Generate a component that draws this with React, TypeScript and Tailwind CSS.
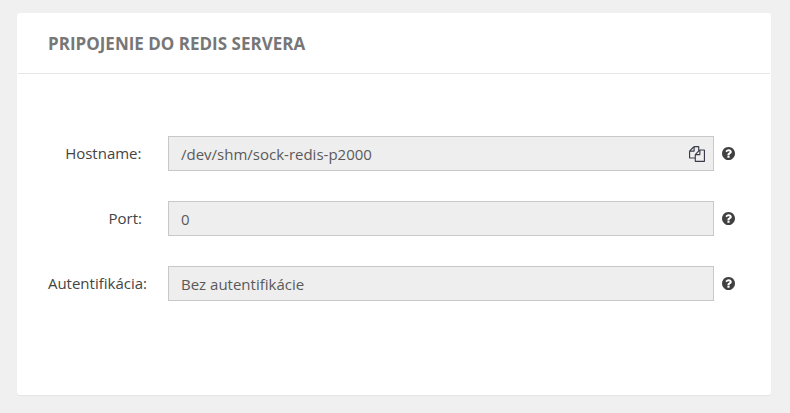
import React from 'react';

interface FieldProps {
  label: string;
  value: string;
  copyable?: boolean;
  labelClassName?: string;
}

const FIELDS: FieldProps[] = [
  { label: 'Hostname:', value: '/dev/shm/sock-redis-p2000', copyable: true, labelClassName: 'mr-[26.5px]' },
  { label: 'Port:', value: '0', labelClassName: 'mr-[26px]' },
  { label: 'Autentifikácia:', value: 'Bez autentifikácie', labelClassName: 'mr-[21px]' },
];

const CopyIcon: React.FC = () => (
  <svg className="text-[#3a3a4a]" width="16" height="16" viewBox="0 0 1792 1792" fill="currentColor">
    <path d="M1696 384q40 0 68 28t28 68v1216q0 40-28 68t-68 28h-960q-40 0-68-28t-28-68v-288h-544q-40 0-68-28t-28-68v-672q0-40 20-88t48-76l408-408q28-28 76-48t88-20h416q40 0 68 28t28 68v328q68-40 128-40h416zm-544 213l-299 299h299v-299zm-640-384l-299 299h299v-299zm196 647l316-316v-416h-384v416q0 40-28 68t-68 28h-416v640h512v-256q0-40 20-88t48-76zm956 804v-1152h-384v416q0 40-28 68t-68 28h-416v640h896z" />
  </svg>
);

const HelpIcon: React.FC = () => (
  <svg className="ml-2 text-[#404040]" width="13" height="13" viewBox="128 128 1536 1536" fill="currentColor">
    <path d="M1024 1376v-192q0-14-9-23t-23-9h-192q-14 0-23 9t-9 23v192q0 14 9 23t23 9h192q14 0 23-9t9-23zm256-672q0-88-55.5-163t-138.5-116-170-41q-243 0-371 213-15 24 8 42l132 100q7 6 19 6 16 0 25-12 53-68 86-92 34-24 86-24 48 0 85.5 26t37.5 59q0 38-20 61t-68 45q-63 28-115.5 86.5t-52.5 125.5v36q0 14 9 23t23 9h192q14 0 23-9t9-23q0-19 21.5-49.5t54.5-49.5q32-18 49-28.5t46-35 44.5-48 28-60.5 12.5-81zm384 192q0 209-103 385.5t-279.5 279.5-385.5 103-385.5-103-279.5-279.5-103-385.5 103-385.5 279.5-279.5 385.5-103 385.5 103 279.5 279.5 103 385.5z" />
  </svg>
);

const Field: React.FC<FieldProps> = ({ label, value, copyable, labelClassName = '' }) => (
  <div className="flex h-[35px] items-center">
    <div className="flex w-[151px] shrink-0 justify-end">
      <span className={`whitespace-nowrap text-[#444] ${labelClassName}`}>{label}</span>
    </div>
    <div className="flex h-[35px] w-[546px] items-center justify-between border border-[#c8c8c8] bg-[#eee] pr-2 pl-3 text-[#5a5a5a]">
      <span className="pt-0.5">{value}</span>
      {copyable && <CopyIcon />}
    </div>
    <HelpIcon />
  </div>
);

const App: React.FC = () => {
  return (
    <div className="h-[413px] bg-[#f0f0f0] pt-[13px] pl-[17px] font-['Open_Sans',sans-serif] text-[15px]">
      <div className="h-[382px] w-[754px] rounded-[3px] bg-white shadow-[0_1px_1px_rgba(0,0,0,0.05)]">
        <h2 className="mx-px flex h-[61px] items-center border-b border-[#e7e7e7] pt-0.5 pl-[30px] text-[17px] font-bold text-[#777]">
          PRIPOJENIE DO REDIS SERVERA
        </h2>
        <div className="flex flex-col gap-[30px] pt-[62px]">
          {FIELDS.map((field) => (
            <Field key={field.label} {...field} />
          ))}
        </div>
      </div>
    </div>
  );
};

export default App;
